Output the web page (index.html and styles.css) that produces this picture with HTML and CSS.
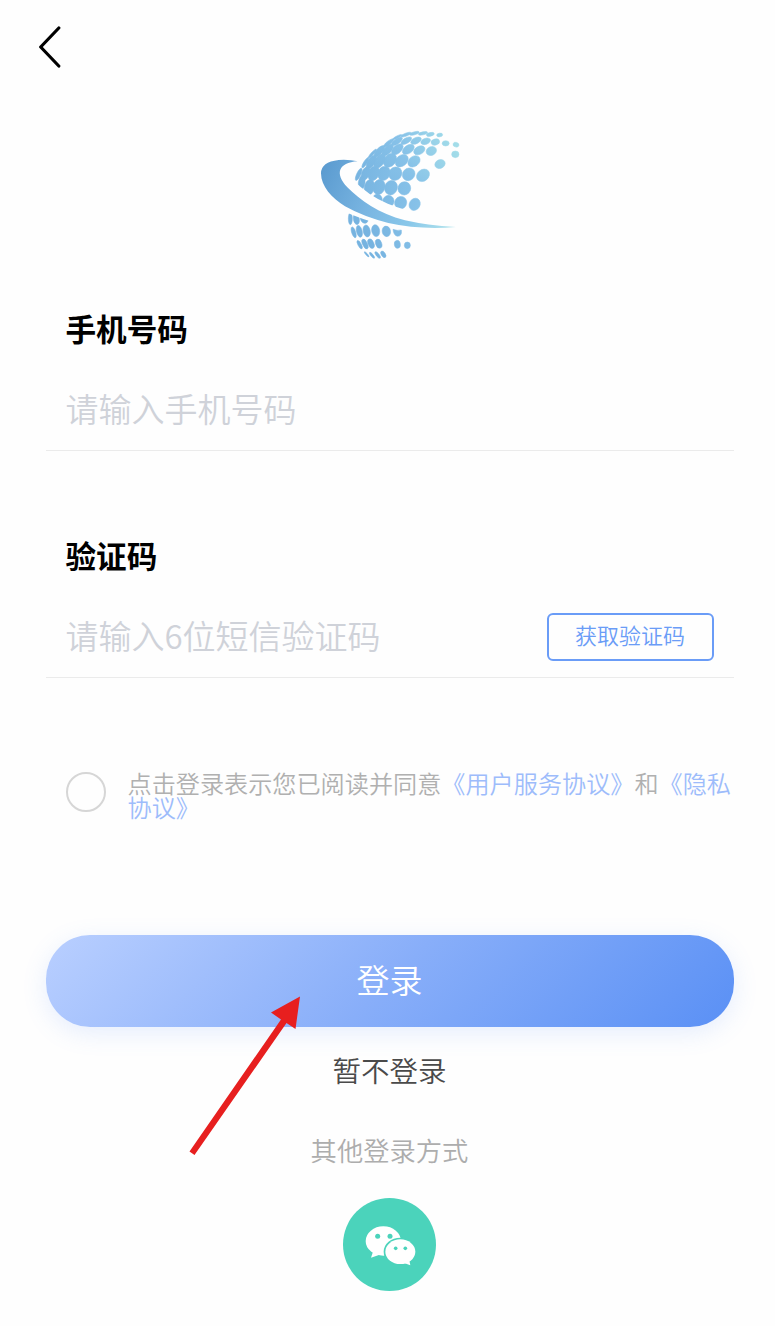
FILE: index.html
```html
<!DOCTYPE html>
<html lang="zh-CN">
<head>
    <meta charset="UTF-8">
    <meta name="viewport" content="width=device-width, initial-scale=1.0">
    <title>登录</title>
    <link rel="stylesheet" href="styles.css">
</head>
<body>
    <div class="page">
        <button class="back" type="button" aria-label="返回">
            <svg width="24" height="44" viewBox="0 0 24 44">
                <path d="M21.8 3L3.7 22L21.8 41" />
            </svg>
        </button>

        <svg class="logo" viewBox="0 0 480 435">
            <defs>
                <linearGradient id="dots" gradientUnits="userSpaceOnUse" x1="130" y1="200" x2="450" y2="110">
                    <stop offset="0" stop-color="#76b3e0" />
                    <stop offset="0.5" stop-color="#86c1e8" />
                    <stop offset="1" stop-color="#a3dde9" />
                </linearGradient>
                <linearGradient id="swoosh" gradientUnits="userSpaceOnUse" x1="33" y1="150" x2="440" y2="320">
                    <stop offset="0" stop-color="#5b9bd0" />
                    <stop offset="0.4" stop-color="#7ab6e2" />
                    <stop offset="0.7" stop-color="#8ac8ea" />
                    <stop offset="1" stop-color="#b5e6ec" />
                </linearGradient>
            </defs>
            <!-- globe -->
            <g fill="url(#dots)" stroke="url(#dots)" stroke-width="1.5">
                <ellipse cx="438" cy="74" rx="9" ry="7" transform="rotate(20 438 74)" />
                <ellipse cx="436" cy="103" rx="11" ry="10" />
                <ellipse cx="407" cy="70" rx="10.5" ry="8" />
                <ellipse cx="390" cy="132" rx="16" ry="13" transform="rotate(-25 390 132)" />
                <ellipse cx="389" cy="45" rx="9" ry="5.5" transform="rotate(-8 389 45)" />
                <ellipse cx="376" cy="66" rx="13" ry="9" transform="rotate(-15 376 66)" />
                <ellipse cx="364" cy="93" rx="16" ry="13" transform="rotate(-25 364 93)" />
                <ellipse cx="339" cy="166" rx="21" ry="17" transform="rotate(-40 339 166)" />
                <ellipse cx="361" cy="43" rx="12" ry="5.5" transform="rotate(-12 361 43)" />
                <ellipse cx="347" cy="64" rx="15" ry="9" transform="rotate(-20 347 64)" />
                <ellipse cx="328" cy="91" rx="18" ry="12" transform="rotate(-28 328 91)" />
                <ellipse cx="312" cy="124" rx="20" ry="15" transform="rotate(-38 312 124)" />
                <ellipse cx="296" cy="163" rx="20" ry="18" transform="rotate(-45 296 163)" />
                <ellipse cx="283" cy="205" rx="19" ry="20" transform="rotate(20 283 205)" />
                <ellipse cx="339" cy="40" rx="14" ry="4.5" transform="rotate(-12 339 40)" />
                <ellipse cx="318" cy="62" rx="17" ry="9" transform="rotate(-25 318 62)" />
                <ellipse cx="295" cy="88" rx="20" ry="12" transform="rotate(-35 295 88)" />
                <ellipse cx="275" cy="122" rx="22" ry="16" transform="rotate(-40 275 122)" />
                <ellipse cx="256" cy="161" rx="21" ry="19" transform="rotate(-50 256 161)" />
                <ellipse cx="243" cy="203" rx="19" ry="22" transform="rotate(20 243 203)" />
                <ellipse cx="313" cy="40" rx="15" ry="4.5" transform="rotate(-14 313 40)" />
                <ellipse cx="289" cy="62" rx="18" ry="8" transform="rotate(-30 289 62)" />
                <ellipse cx="262" cy="88" rx="21" ry="12" transform="rotate(-42 262 88)" />
                <ellipse cx="240" cy="121" rx="23" ry="17" transform="rotate(-50 240 121)" />
                <ellipse cx="222" cy="160" rx="18" ry="22" transform="rotate(25 222 160)" />
                <ellipse cx="207" cy="201" rx="18" ry="23" transform="rotate(18 207 201)" />
                <ellipse cx="288" cy="44" rx="16" ry="4.5" transform="rotate(-20 288 44)" />
                <ellipse cx="261" cy="64" rx="19" ry="8" transform="rotate(-35 261 64)" />
                <ellipse cx="233" cy="90" rx="22" ry="11" transform="rotate(-46 233 90)" />
                <ellipse cx="209" cy="123" rx="24" ry="14" transform="rotate(-56 209 123)" />
                <ellipse cx="191" cy="160" rx="16" ry="23" transform="rotate(22 191 160)" />
                <ellipse cx="178" cy="202" rx="15" ry="24" transform="rotate(12 178 202)" />
                <ellipse cx="262" cy="51" rx="15" ry="3.5" transform="rotate(-27 262 51)" />
                <ellipse cx="236" cy="69" rx="19" ry="6" transform="rotate(-38 236 69)" />
                <ellipse cx="208" cy="94" rx="22" ry="9" transform="rotate(-48 208 94)" />
                <ellipse cx="184" cy="126" rx="23" ry="11" transform="rotate(-58 184 126)" />
                <ellipse cx="167" cy="160" rx="12" ry="21" transform="rotate(22 167 160)" />
                <ellipse cx="155" cy="188" rx="10" ry="22" transform="rotate(8 155 188)" />
                <ellipse cx="187" cy="101" rx="18" ry="4" transform="rotate(-48 187 101)" />
                <ellipse cx="166" cy="128" rx="18" ry="5" transform="rotate(-58 166 128)" />
                <ellipse cx="146" cy="163" rx="6" ry="20" transform="rotate(25 146 163)" />
                <ellipse cx="202" cy="240" rx="15" ry="18" />
                <ellipse cx="235" cy="244" rx="17" ry="18" transform="rotate(20 235 244)" />
                <ellipse cx="272" cy="248" rx="18" ry="19" transform="rotate(30 272 248)" />
                <ellipse cx="314" cy="253" rx="16" ry="19" transform="rotate(30 314 253)" />
                <ellipse cx="121" cy="296" rx="6" ry="18" />
                <ellipse cx="139" cy="297" rx="9" ry="17" transform="rotate(-10 139 297)" />
                <ellipse cx="163" cy="295" rx="12" ry="15" transform="rotate(-15 163 295)" />
                <ellipse cx="131" cy="337" rx="6" ry="17" transform="rotate(-18 131 337)" />
                <ellipse cx="148" cy="334" rx="8.5" ry="18" transform="rotate(-14 148 334)" />
                <ellipse cx="170" cy="333" rx="10.5" ry="18" transform="rotate(-12 170 333)" />
                <ellipse cx="197" cy="332" rx="12" ry="18" transform="rotate(-10 197 332)" />
                <ellipse cx="229" cy="334" rx="12.5" ry="16" transform="rotate(-10 229 334)" />
                <path d="M249 328Q262 333 274 330Q277 348 263 349Q251 348 249 328Z" />
                <ellipse cx="149" cy="374" rx="5" ry="14" transform="rotate(-28 149 374)" />
                <ellipse cx="165" cy="372" rx="7" ry="16" transform="rotate(-25 165 372)" />
                <ellipse cx="183" cy="371" rx="8.5" ry="15" transform="rotate(-23 183 371)" />
                <ellipse cx="206" cy="371" rx="9" ry="14" transform="rotate(-20 206 371)" />
                <ellipse cx="262" cy="373" rx="9" ry="12" transform="rotate(-10 262 373)" />
                <ellipse cx="292" cy="376" rx="9" ry="10" />
                <ellipse cx="170" cy="403" rx="2.5" ry="10" transform="rotate(-42 170 403)" />
                <ellipse cx="186" cy="406" rx="3.5" ry="11" transform="rotate(-40 186 406)" />
                <ellipse cx="203" cy="405" rx="4.5" ry="12" transform="rotate(-38 203 405)" />
                <ellipse cx="220" cy="403" rx="6" ry="11" transform="rotate(-32 220 403)" />
            </g>
            <!-- gap between the globe and the swoosh -->
            <path class="logo-gap" d="M118 188Q166 238 228 264Q285 287 350 299" />
            <path class="logo-gap-thin" d="M100 263Q158 290 230 308Q290 320 380 324" />
            <path fill="url(#swoosh)" d="M143 124Q118 118 86 120Q33 126 33 160C33 200 66 234 105 259Q160 290 235 309Q330 330 438 321Q350 316 285 301C205 281 150 240 112 202C74 162 84 128 143 124Z" />
        </svg>

        <div class="form-group">
            <label for="phone">手机号码</label>
            <div class="field">
                <input type="tel" id="phone" placeholder="请输入手机号码">
            </div>
        </div>

        <div class="form-group">
            <label for="code">验证码</label>
            <div class="field">
                <input type="text" id="code" placeholder="请输入6位短信验证码">
                <button class="get-code" type="button">获取验证码</button>
            </div>
        </div>

        <div class="agreement">
            <span class="radio"></span>
            <p>点击登录表示您已阅读并同意<a href="#">《用户服务协议》</a>和<a href="#">《隐私协议》</a></p>
        </div>

        <button class="login" type="button">登录</button>
        <button class="skip" type="button">暂不登录</button>

        <div class="other">其他登录方式</div>
        <button class="wechat" type="button" aria-label="微信登录">
            <svg width="93" height="93" viewBox="0 0 279 279">
                <g fill="#fff">
                    <ellipse cx="121" cy="129" rx="53" ry="44" />
                    <path d="M92 155L84 179L114 169Z" />
                </g>
                <ellipse cx="172" cy="161" rx="50" ry="42" fill="#4bd3bb" />
                <g fill="#fff">
                    <ellipse cx="172" cy="161" rx="45" ry="37" />
                    <path d="M183 195L202 202L198 183Z" />
                </g>
                <g fill="#4bd3bb">
                    <circle cx="104" cy="115" r="7.5" />
                    <circle cx="141" cy="115" r="7.5" />
                    <circle cx="158" cy="151" r="5.5" />
                    <circle cx="187" cy="151" r="5.5" />
                </g>
            </svg>
        </button>

        <!-- pointer to the login button -->
        <svg class="arrow" width="114" height="162" viewBox="0 0 114 162">
            <path d="M112 1.5L107.5 34L98.5 28L6.5 160L1.5 156.5L93 24.5L83 17.5Z" />
        </svg>
    </div>
</body>
</html>
```
FILE: styles.css
```css
body {
    font-family: "Noto Sans CJK SC", sans-serif;
    font-weight: 350;
    margin: 0;
    padding: 0;
    background-color: #fefefe;
}

.page {
    position: relative;
    display: flex;
    flex-direction: column;
    box-sizing: border-box;
    height: 1326px;
    padding: 25px 41.5px 0 45.5px;
    overflow: hidden;
}

button {
    font-family: inherit;
    font-weight: inherit;
    padding: 0;
    border: none;
    background: none;
    cursor: pointer;
}

svg {
    display: block;
}

.back {
    width: 24px;
    height: 44px;
    margin-left: -9px;
}

.back path {
    fill: none;
    stroke: #000;
    stroke-width: 3.2;
    stroke-linecap: round;
    stroke-linejoin: round;
}

.logo {
    width: 160px;
    height: 145px;
    margin: 51px 0 0 264.5px;
}

.logo-gap {
    fill: none;
    stroke: #fefefe;
    stroke-width: 28;
}

.logo-gap-thin {
    fill: none;
    stroke: #fefefe;
    stroke-width: 18;
}

.form-group {
    height: 189px;
    margin-top: 38px;
}

.form-group label {
    display: block;
    padding-left: 20px;
    font-size: 30.6px;
    font-weight: bold;
    line-height: 50px;
    color: #000;
}

.field {
    display: flex;
    align-items: center;
    height: 80px;
    margin-top: 16.5px;
    padding: 0 20px;
    border-bottom: 1.5px solid #ebebeb;
}

.field input {
    flex: 1;
    min-width: 0;
    height: 60px;
    padding: 0 0 4px;
    box-sizing: border-box;
    border: none;
    outline: none;
    background: none;
    font-family: inherit;
    font-size: 33px;
    font-weight: inherit;
}

.field input::placeholder {
    color: #cfd2d9;
}

.get-code {
    width: 167px;
    height: 48px;
    padding-bottom: 5px;
    border: 2px solid #6a9cf7;
    border-radius: 6px;
    font-size: 22px;
    line-height: 38px;
    color: #6a9cf7;
}

.agreement {
    display: flex;
    align-items: flex-start;
    margin-top: 52.5px;
    padding-left: 20px;
}

.radio {
    box-sizing: border-box;
    width: 40px;
    height: 40px;
    flex-shrink: 0;
    border: 2px solid #d6d6d6;
    border-radius: 50%;
}

.agreement p {
    margin: -1px -5px 0 22px;
    font-size: 24.15px;
    line-height: 24px;
    color: #b0b0b0;
}

.agreement a {
    color: #9dbcfb;
    text-decoration: none;
}

.login {
    height: 92px;
    flex-shrink: 0;
    margin-top: 116px;
    padding-bottom: 4px;
    border-radius: 44px;
    background: linear-gradient(135deg, #b9cfff 0%, #88aef9 50%, #5a90f5 100%);
    box-shadow: 0 6px 24px rgba(90, 144, 245, 0.15);
    font-size: 33px;
    color: #fff;
}

.skip {
    align-self: center;
    margin-top: 22.5px;
    font-size: 28.5px;
    line-height: 42px;
    color: #4a4a4a;
}

.other {
    margin-top: 39px;
    font-size: 26.3px;
    line-height: 40px;
    text-align: center;
    color: #adadad;
}

.wechat {
    align-self: center;
    width: 93px;
    height: 93px;
    margin-top: 28px;
    border-radius: 50%;
    background-color: #4bd3bb;
}

.arrow {
    position: absolute;
    left: 188px;
    top: 995px;
}

.arrow path {
    fill: #e71f1f;
}
```
